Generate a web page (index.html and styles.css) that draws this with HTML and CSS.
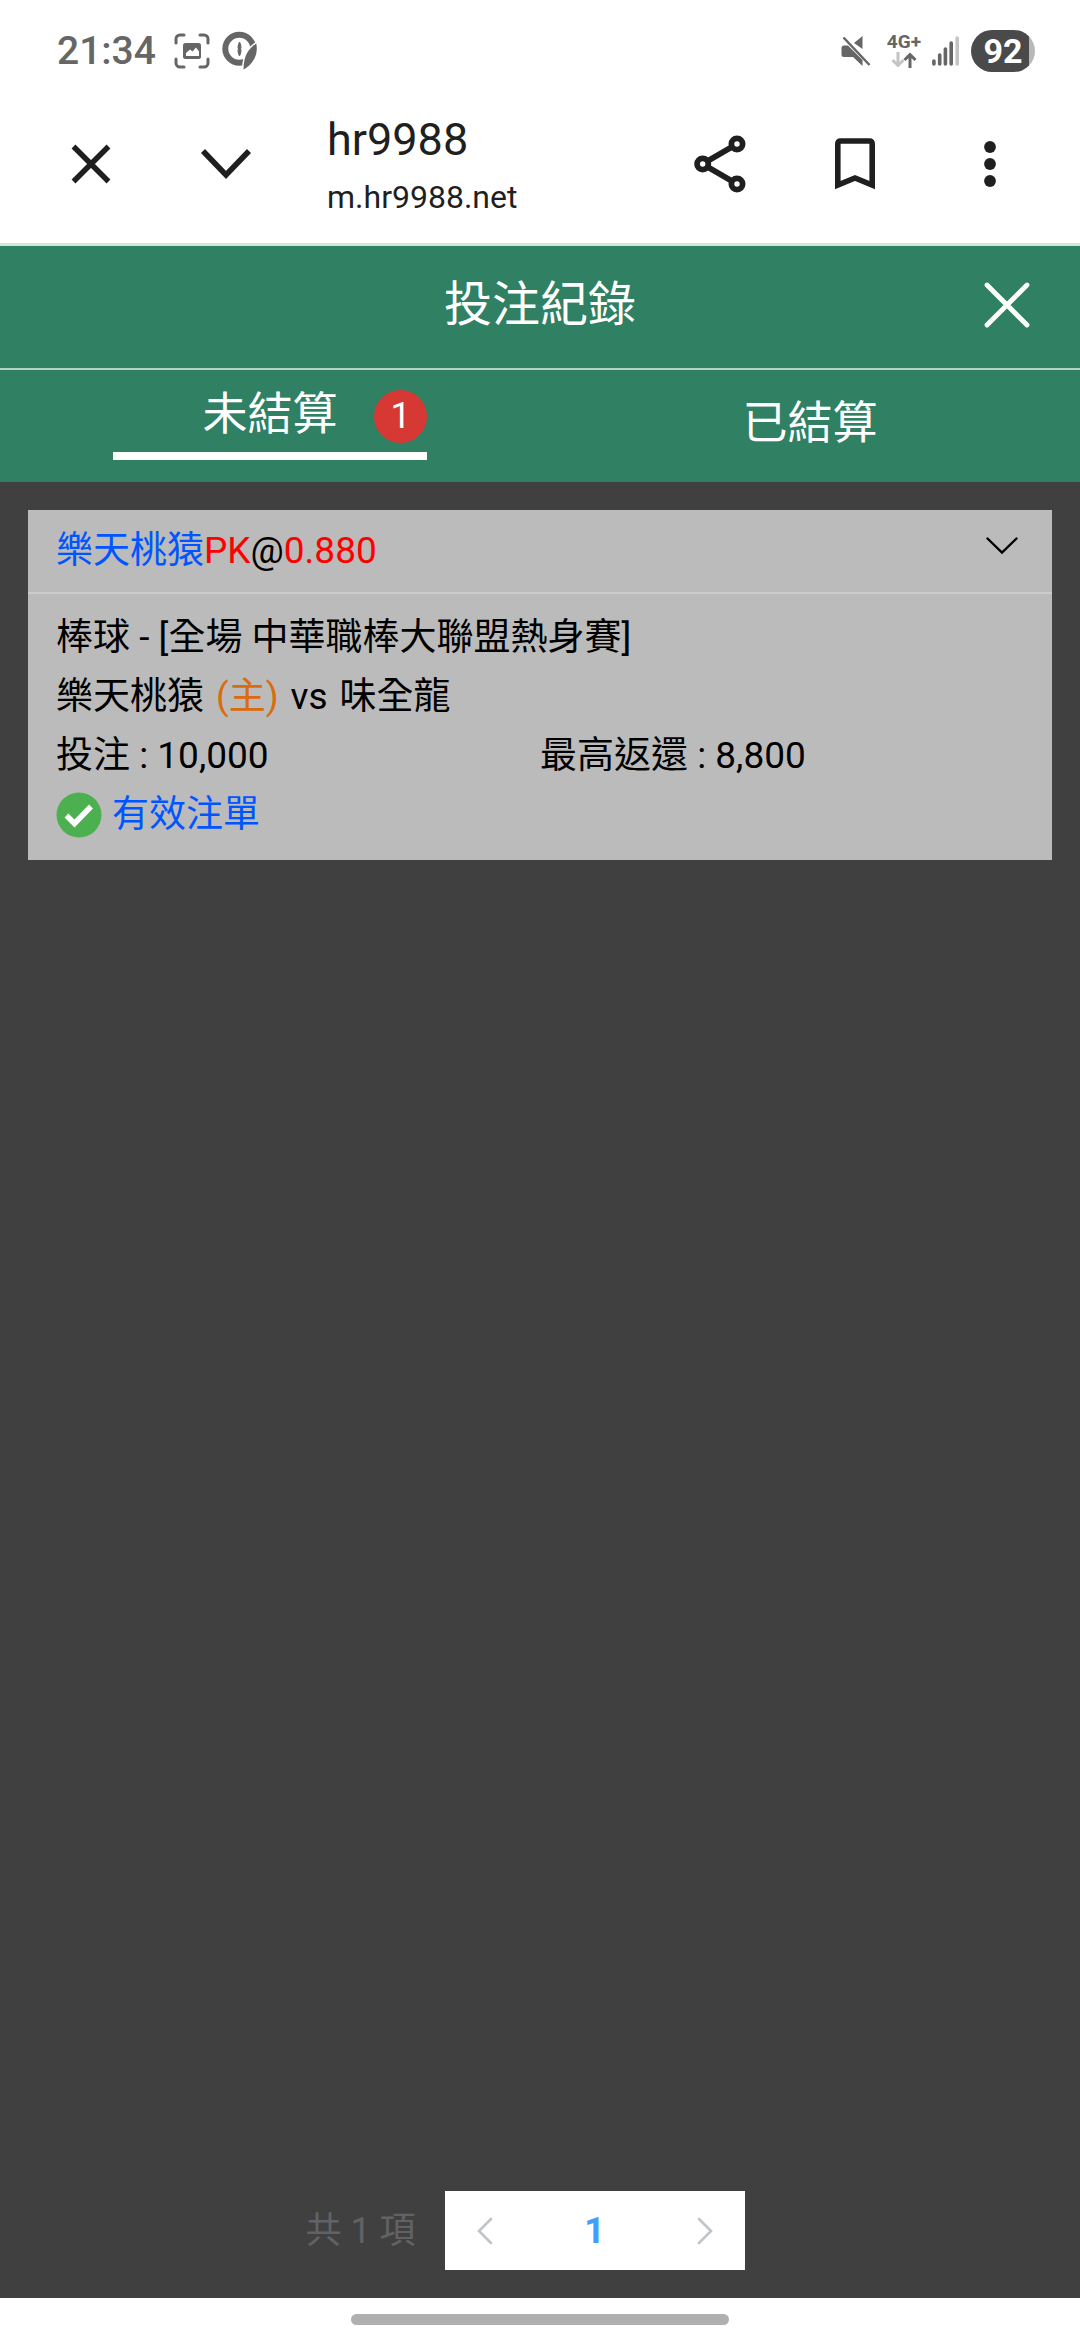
FILE: index.html
```html
<!DOCTYPE html>
<html lang="zh-Hant">
<head>
<meta charset="utf-8">
<meta name="viewport" content="width=device-width, initial-scale=1">
<title>投注紀錄</title>
<link rel="stylesheet" href="styles.css">
</head>
<body>
<div class="status-bar">
  <div class="status-left">
    <span class="clock">21:34</span>
    <svg class="icon-capture" width="36" height="36" viewBox="0 0 36 36" fill="none">
      <path d="M2 10V6a4 4 0 0 1 4-4h4M26 2h4a4 4 0 0 1 4 4v4M34 26v4a4 4 0 0 1-4 4h-4M10 34H6a4 4 0 0 1-4-4v-4" stroke="#666" stroke-width="3" stroke-linecap="round"/>
      <rect x="9" y="10" width="18" height="16" rx="2.500" fill="#666"/>
      <path d="M12 23v-3l4-3.500 2.500 2 3.500-4 3 4v4.500z" fill="#fff"/>
    </svg>
    <svg class="icon-pen" width="36" height="40" viewBox="0 0 36 40">
      <circle cx="17.300" cy="17.700" r="14" fill="none" stroke="#666" stroke-width="6"/>
      <path d="M34.300 12.500C27 17 21.500 24 21.500 38.500C31 33 36.500 24 34.300 12.500z" fill="#666" stroke="#fff" stroke-width="3" paint-order="stroke"/>
      <path d="M17.500 11l1.200 3v8l-1.200 3-1.200-3v-8zM15.500 16h4M15.500 20h4" fill="#666" stroke="#666" stroke-width="1"/>
    </svg>
  </div>
  <div class="status-right">
    <svg width="30" height="30" viewBox="0 0 30 30">
      <path d="M0.500 12q0-2.500 2.500-2.500h4L21.500 24v6L12 21H3q-2.500 0-2.500-2.500zM21.500 0v13L13 7z" fill="#666"/>
      <path d="M2.500 1.500L28.500 29" stroke="#666" stroke-width="2.500"/>
    </svg>
    <div class="network">
      <span class="network-label">4G+</span>
      <svg width="26" height="16" viewBox="0 0 26 16" fill="none" stroke-width="3">
        <path d="M7 0v13M1.500 8L7 13.500 12.500 8" stroke="#c4c4c4"/>
        <path d="M19 16V3M13.500 8L19 2.500 24.500 8" stroke="#666"/>
      </svg>
    </div>
    <svg class="icon-signal" width="28" height="30" viewBox="0 0 28 30">
      <path d="M1.900 25v3M7.700 19v9M13.400 13v15M19.200 7v21" stroke="#666" stroke-width="3.600" stroke-linecap="round"/>
      <path d="M25.200 2v26" stroke="#c4c4c4" stroke-width="3.600" stroke-linecap="round"/>
    </svg>
    <span class="battery">92</span>
  </div>
</div>

<div class="browser-bar">
  <button class="bar-button" type="button" aria-label="關閉">
    <svg width="42" height="42" viewBox="0 0 42 42" stroke="#1f1f1f" stroke-width="5.400"><path d="M3.500 3.500l35 35M38.500 3.500l-35 35"/></svg>
  </button>
  <button class="bar-button" type="button" aria-label="展開">
    <svg width="52" height="32" viewBox="0 0 52 32" fill="none" stroke="#1f1f1f" stroke-width="5.600"><path d="M3 3l23 24L49 3"/></svg>
  </button>
  <div class="site">
    <div class="site-title">hr9988</div>
    <div class="site-host">m.hr9988.net</div>
  </div>
  <button class="bar-button" type="button" aria-label="分享">
    <svg width="52" height="58" viewBox="0 0 52 58" fill="#fff" stroke="#1f1f1f" stroke-width="5.800"><path d="M8.500 29L43 9M8.500 29L43 49"/><circle cx="8.700" cy="29" r="5.600"/><circle cx="43" cy="9" r="5.600"/><circle cx="43" cy="49" r="5.600"/></svg>
  </button>
  <button class="bar-button" type="button" aria-label="書籤">
    <svg width="40" height="52" viewBox="0 0 40 52" fill="none" stroke="#1f1f1f" stroke-width="5.600"><path d="M2.800 47V6q0-3 3-3h28.400q3 0 3 3v41L20 40z"/></svg>
  </button>
  <button class="bar-button" type="button" aria-label="更多">
    <svg width="12" height="48" viewBox="0 0 12 48" fill="#1f1f1f"><circle cx="6" cy="7" r="5.900"/><circle cx="6" cy="24" r="5.900"/><circle cx="6" cy="41" r="5.900"/></svg>
  </button>
</div>

<header class="page-header">
  <h1 class="page-title">投注紀錄</h1>
  <button class="page-close" type="button" aria-label="關閉">
    <svg width="46" height="46" viewBox="0 0 46 46" stroke="#fff" stroke-width="4.800" stroke-linecap="round"><path d="M3 3l40 40M43 3L3 43"/></svg>
  </button>
</header>

<nav class="tabs">
  <button class="tab tab-active" type="button">未結算<span class="badge">1</span></button>
  <button class="tab" type="button">已結算</button>
</nav>

<main class="content">
  <article class="bet">
    <div class="bet-head">
      <div><span class="team">樂天桃猿</span><span class="odds">PK</span>@<span class="odds">0.880</span></div>
      <button class="bet-toggle" type="button" aria-label="收合">
        <svg width="32" height="18" viewBox="0 0 32 18" fill="none" stroke="#000" stroke-width="2.400" stroke-linecap="round"><path d="M1.500 1.500L16 15.500 30.500 1.500"/></svg>
      </button>
    </div>
    <div class="bet-body">
      <div class="bet-row">棒球 - [全場 中華職棒大聯盟熱身賽]</div>
      <div class="bet-row match"><span>樂天桃猿</span><span class="home">(主)</span><span>vs</span><span>味全龍</span></div>
      <div class="bet-row amounts"><span>投注 : 10,000</span><span>最高返還 : 8,800</span></div>
      <div class="bet-row bet-state">
        <svg width="46" height="46" viewBox="0 0 46 46"><circle cx="23" cy="23" r="22.500" fill="#4caf50"/><path d="M10.500 23.500l8 8L35 14.500" fill="none" stroke="#fff" stroke-width="5.500"/></svg>
        <span>有效注單</span>
      </div>
    </div>
  </article>

  <div class="pager">
    <span class="pager-total">共 1 項</span>
    <div class="pager-box">
      <button class="pager-button" type="button" aria-label="上一頁" disabled>
        <svg width="16" height="28" viewBox="0 0 16 28" fill="none" stroke="#c0c4cc" stroke-width="2.600" stroke-linecap="round"><path d="M14 2L2 14l12 12"/></svg>
      </button>
      <button class="pager-current" type="button">1</button>
      <button class="pager-button" type="button" aria-label="下一頁" disabled>
        <svg width="16" height="28" viewBox="0 0 16 28" fill="none" stroke="#c0c4cc" stroke-width="2.600" stroke-linecap="round"><path d="M2 2l12 12L2 26"/></svg>
      </button>
    </div>
  </div>
</main>

<div class="nav-bar"><span class="nav-handle"></span></div>
</body>
</html>
```
FILE: styles.css
```css
* {
  box-sizing: border-box;
}

body {
  display: flex;
  flex-direction: column;
  min-height: 100vh;
  margin: 0;
  background: #fff;
  color: #000;
  font-family: Roboto, "Noto Sans CJK TC", sans-serif;
  font-size: 36px;
  line-height: 60px;
}

button {
  display: flex;
  align-items: center;
  justify-content: center;
  padding: 0;
  border: 0;
  background: none;
  color: inherit;
  font: inherit;
}

svg {
  display: block;
  flex: none;
}

/* Phone status bar */
.status-bar {
  display: flex;
  align-items: center;
  justify-content: space-between;
  height: 85px;
  padding: 17px 45px 0 57px;
}

.status-left,
.status-right {
  display: flex;
  align-items: center;
}

.status-left {
  gap: 12px;
}

.status-right {
  gap: 11px;
}

.clock {
  margin-right: 6px;
  color: #666;
  font-size: 39px;
  font-weight: 500;
  line-height: 48px;
}

.network {
  display: flex;
  flex-direction: column;
  align-items: center;
  gap: 2px;
  margin-left: 5px;
}

.network-label {
  color: #666;
  font-size: 19px;
  font-weight: 700;
  line-height: 16px;
}

.battery {
  width: 64px;
  border-radius: 21px;
  background: linear-gradient(to right, #4a4a4a 58px, #b8b8b8 58px);
  color: #fff;
  font-size: 34px;
  font-weight: 700;
  line-height: 42px;
  text-align: center;
}

/* Browser toolbar */
.browser-bar {
  display: flex;
  align-items: center;
  height: 161px;
  padding: 0 23px;
  border-bottom: 3px solid #d0e6de;
  color: #1f1f1f;
}

.bar-button {
  width: 135px;
  height: 135px;
}

.site {
  flex: 1;
  padding-left: 34px;
}

.site-title {
  font-size: 45px;
  line-height: 66px;
}

.site-host {
  font-size: 32px;
  line-height: 48px;
}

/* Page header and tabs */
.page-header {
  display: grid;
  grid-template-columns: 1fr auto 1fr;
  align-items: center;
  height: 124px;
  padding: 0 50px 4px;
  border-bottom: 2px solid #b4d3c7;
  background: #308064;
  color: #fff;
}

.page-title {
  grid-column: 2;
  margin: 0;
  font-size: 48px;
  font-weight: 400;
}

.page-close {
  justify-self: end;
}

.tabs {
  display: grid;
  grid-template-columns: 1fr 1fr;
  align-items: center;
  justify-items: center;
  height: 112px;
  padding-bottom: 14px;
  background: #308064;
  color: #fff;
}

.tab {
  position: relative;
  width: 314px;
  height: 82px;
  padding-top: 10px;
  font-size: 45px;
}

.tab-active {
  padding-top: 0;
  border-bottom: 8px solid #fff;
}

.badge {
  position: absolute;
  top: 12px;
  right: 0;
  width: 53px;
  border-radius: 50%;
  background: #d63834;
  font-size: 36px;
  line-height: 53px;
}

/* Bet list */
.content {
  display: flex;
  flex: 1;
  flex-direction: column;
  justify-content: space-between;
  padding: 28px;
  background: #404040;
}

.bet {
  background: #bbb;
  font-size: 37px;
  line-height: 59px;
}

.bet-head {
  display: flex;
  justify-content: space-between;
  height: 84px;
  padding: 11px 34px 0 28px;
  border-bottom: 2px solid #ccc;
}

.team,
.bet-state {
  color: #0055ff;
}

.odds {
  color: #f00;
}

.bet-toggle {
  height: 50px;
}

.bet-body {
  padding: 14px 28px 16px;
}

.bet-row {
  display: flex;
  align-items: center;
}

.match {
  gap: 12px;
}

.home {
  color: #d96c0c;
}

.amounts {
  display: grid;
  grid-template-columns: 1fr 1fr;
}

.bet-state {
  gap: 10px;
}

/* Pagination */
.pager {
  display: flex;
  align-items: center;
  justify-content: center;
  gap: 29px;
  padding-right: 30px;
}

.pager-total {
  color: #606266;
}

.pager-box {
  display: flex;
  width: 300px;
  height: 79px;
  background: #fff;
}

.pager-button {
  width: 80px;
}

.pager-current {
  flex: 1;
  color: #409eff;
  font-weight: 700;
}

/* Gesture bar */
.nav-bar {
  display: flex;
  justify-content: center;
  height: 42px;
  padding-top: 16px;
}

.nav-handle {
  width: 35%;
  height: 11px;
  border-radius: 6px;
  background: #b0b0b0;
}
```
